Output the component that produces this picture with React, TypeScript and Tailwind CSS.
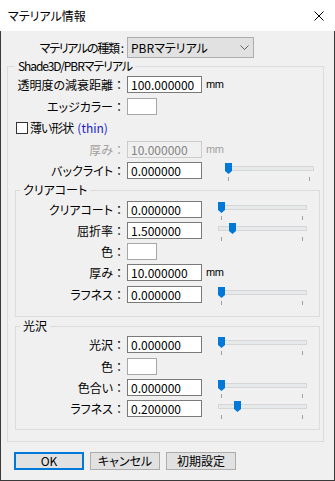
import React from "react";

function Label({ text, w, disabled }: { text: string; w: string; disabled?: boolean }) {
  return (
    <div className={`flex shrink-0 items-center justify-end ${w} ${disabled ? "text-[#a0a0a0]" : "text-black"}`}>
      <span>{text}</span>
      <span className="w-[12px] text-center [font-feature-settings:normal]">：</span>
    </div>
  );
}

function NumInput({ value, disabled }: { value: string; disabled?: boolean }) {
  return (
    <div
      className={`ml-[2px] flex h-[17px] w-[75px] shrink-0 items-center border pl-[3px] ${
        disabled ? "border-[#cccccc] bg-[#f0f0f0] text-[#838383]" : "border-[#7a7a7a] bg-white text-black"
      }`}
    >
      {value}
    </div>
  );
}

function ColorBox() {
  return <div className="ml-[2px] h-[17px] w-[30px] shrink-0 border border-[#a8a8a8] bg-white" />;
}

function Mm({ disabled }: { disabled?: boolean }) {
  return (
    <span className={`ml-[4px] self-center text-[11px] tracking-[-0.5px] font-['Liberation_Sans',sans-serif] ${disabled ? "text-[#a0a0a0]" : "text-black"}`}>
      mm
    </span>
  );
}

function Slider({ pos, ml }: { pos: number; ml: string }) {
  return (
    <svg className={`${ml} shrink-0 overflow-visible`} width="90" height="20" viewBox="0 0 90 20">
      <rect x="0.5" y="4.5" width="88" height="4" fill="#e7eaea" stroke="#d6d6d6" />
      <line x1="3.5" y1="15" x2="3.5" y2="19" stroke="#a0a0a0" />
      <line x1="84.5" y1="15" x2="84.5" y2="19" stroke="#a0a0a0" />
      <path d={`M${pos} 1 H${pos + 7} V9 L${pos + 3.5} 12 L${pos} 9 Z`} fill="#0078d7" />
    </svg>
  );
}

function Group({
  title,
  className,
  children,
  legendLeft,
  legendClass = "",
}: {
  title: string;
  className: string;
  children: React.ReactNode;
  legendLeft: string;
  legendClass?: string;
}) {
  return (
    <div className={`relative flex flex-col border border-[#dcdcdc] ${className}`}>
      <span className={`absolute -top-[9px] ${legendLeft} bg-[#f0f0f0] px-[3px] leading-[16px] ${legendClass}`}>{title}</span>
      {children}
    </div>
  );
}

export default function App() {
  return (
    <div className="flex h-[481px] w-[335px] flex-col bg-white text-[12px] leading-none text-black font-['Noto_Sans_CJK_JP',sans-serif] [font-feature-settings:'palt']">
      {/* Title bar */}
      <div className="flex h-[31px] shrink-0 items-center justify-between bg-white pl-[8px] pr-[11px]">
        <span>マテリアル情報</span>
        <svg width="10" height="10" viewBox="0 0 10 10">
          <path d="M0.5 0.5 L9.5 9.5 M9.5 0.5 L0.5 9.5" stroke="#000" strokeWidth="1" />
        </svg>
      </div>

      {/* Body */}
      <div className="flex flex-1 flex-col border-x border-b border-[#3a3a3a] bg-[#f0f0f0] pl-[6px]">
        {/* Combo row */}
        <div className="mt-[6px] flex h-[21px] items-center">
          <div className="flex w-[118px] shrink-0 items-center justify-end">
            <span className="tracking-[-1.3px]">マテリアルの種類</span>
            <span className="ml-[2px] mr-[1px]">:</span>
          </div>
          <div className="ml-[2px] flex h-[21px] w-[127px] items-center justify-between border border-[#adadad] bg-[#e1e1e1] pl-[3px] pr-[4px]">
            <span>PBRマテリアル</span>
            <svg width="9" height="5" viewBox="0 0 9 5">
              <path d="M0.5 0.5 L4.5 4.5 L8.5 0.5" fill="none" stroke="#606060" strokeWidth="1" />
            </svg>
          </div>
        </div>

        {/* Outer group */}
        <Group
          title="Shade3D/PBRマテリアル"
          className="mt-[8px] w-[317px] pb-[11px]"
          legendLeft="left-[7px]"
          legendClass="tracking-[-1.1px]"
        >
          <div className="mt-[9px] flex h-[17px]">
            <Label text="透明度の減衰距離" w="w-[117px]" />
            <NumInput value="100.000000" />
            <Mm />
          </div>
          <div className="mt-[5px] flex h-[17px]">
            <Label text="エッジカラー" w="w-[117px]" />
            <ColorBox />
          </div>
          <div className="mt-[5px] flex h-[16px] items-center pl-[8px]">
            <div className="h-[12px] w-[12px] border border-[#333333] bg-white" />
            <span className="ml-[2px] tracking-[-1px]">薄い形状</span>
            <span className="ml-[4px] text-[#1a1ad0]">(thin)</span>
          </div>
          <div className="mt-[5px] flex h-[17px]">
            <Label text="厚み" w="w-[117px]" disabled />
            <NumInput value="10.000000" disabled />
            <Mm disabled />
          </div>
          <div className="mt-[4px] flex h-[17px]">
            <Label text="バックライト" w="w-[117px]" />
            <NumInput value="0.000000" />
            <Slider pos={0} ml="ml-[23px]" />
          </div>

          {/* Clear coat */}
          <Group title="クリアコート" className="ml-[7px] mt-[11px] w-[305px] pb-[13px]" legendLeft="left-[4px]">
            <div className="mt-[10px] flex h-[17px]">
              <Label text="クリアコート" w="w-[109px]" />
              <NumInput value="0.000000" />
              <Slider pos={0} ml="ml-[16px]" />
            </div>
            <div className="mt-[4px] flex h-[17px]">
              <Label text="屈折率" w="w-[109px]" />
              <NumInput value="1.500000" />
              <Slider pos={11} ml="ml-[16px]" />
            </div>
            <div className="mt-[4px] flex h-[17px]">
              <Label text="色" w="w-[109px]" />
              <ColorBox />
            </div>
            <div className="mt-[4px] flex h-[17px]">
              <Label text="厚み" w="w-[109px]" />
              <NumInput value="10.000000" />
              <Mm />
            </div>
            <div className="mt-[5px] flex h-[17px]">
              <Label text="ラフネス" w="w-[109px]" />
              <NumInput value="0.000000" />
              <Slider pos={0} ml="ml-[16px]" />
            </div>
          </Group>

          {/* Gloss */}
          <Group title="光沢" className="ml-[7px] mt-[9px] w-[305px] pb-[12px]" legendLeft="left-[4px]">
            <div className="mt-[9px] flex h-[17px]">
              <Label text="光沢" w="w-[109px]" />
              <NumInput value="0.000000" />
              <Slider pos={0} ml="ml-[16px]" />
            </div>
            <div className="mt-[5px] flex h-[17px]">
              <Label text="色" w="w-[109px]" />
              <ColorBox />
            </div>
            <div className="mt-[4px] flex h-[17px]">
              <Label text="色合い" w="w-[109px]" />
              <NumInput value="0.000000" />
              <Slider pos={0} ml="ml-[16px]" />
            </div>
            <div className="mt-[4px] flex h-[17px]">
              <Label text="ラフネス" w="w-[109px]" />
              <NumInput value="0.200000" />
              <Slider pos={16} ml="ml-[16px]" />
            </div>
          </Group>
        </Group>

        {/* Buttons */}
        <div className="ml-[7px] mt-[10px] flex gap-[6px]">
          <button className="flex h-[18px] w-[70px] items-center justify-center border-2 border-[#0078d7] bg-[#e1e1e1]">OK</button>
          <button className="flex h-[18px] w-[70px] items-center justify-center border border-[#adadad] bg-[#e1e1e1]">キャンセル</button>
          <button className="flex h-[18px] w-[70px] items-center justify-center border border-[#adadad] bg-[#e1e1e1]">初期設定</button>
        </div>
      </div>
    </div>
  );
}
